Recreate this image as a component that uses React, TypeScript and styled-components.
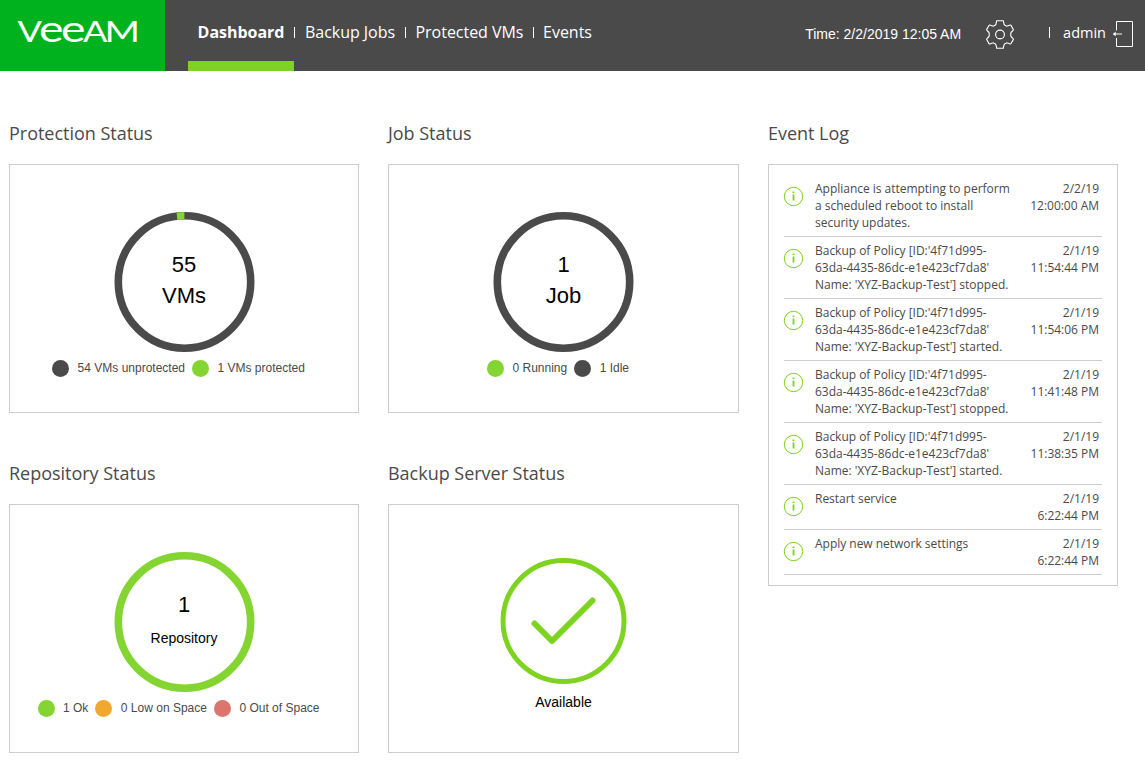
import React from 'react';
import styled, { createGlobalStyle } from 'styled-components';

const Global = createGlobalStyle`
  * { box-sizing: border-box; }
  body { margin: 0; background: #fff; overflow: hidden; font-family: 'Open Sans', sans-serif; color: #4a4a4a; }
`;

const Header = styled.header`
  display: flex;
  height: 71px;
  background: #4a4a4a;
  color: #fff;
`;

const Brand = styled.div`
  width: 165px;
  height: 71px;
  margin-right: 23px;
  background: #00b31e;
`;

const BrandText = styled.text`
  font-family: Lato, sans-serif;
  font-weight: 400;
  fill: #fff;
`;

const Nav = styled.nav`
  display: flex;
`;

const NavItem = styled.a<{ $active?: boolean; $width: number }>`
  display: flex;
  justify-content: center;
  width: ${p => p.$width}px;
  height: 71px;
  line-height: 22px;
  padding-top: 21px;
  font-size: 16px;
  white-space: nowrap;
  font-weight: ${p => (p.$active ? 700 : 400)};
  letter-spacing: -0.03px;
  border-bottom: 10px solid ${p => (p.$active ? '#7ed321' : 'transparent')};
`;

const Separator = styled.span`
  width: 1px;
  height: 11px;
  margin-top: 27px;
  background: #fff;
`;

const Tools = styled.div`
  display: flex;
  margin-left: auto;
  padding-right: 12px;
`;

const Clock = styled.span`
  margin: 26px 24px 0 0;
  font: 14px/16px 'Liberation Sans', sans-serif;
`;

const GearIcon = styled.svg`
  margin: 20px 34px 0 0;
`;

const User = styled.span`
  margin: 22px 7px 0 13px;
  font-size: 14.5px;
  line-height: 22px;
`;

const ExitIcon = styled.svg`
  margin-top: 20px;
`;

const Main = styled.main`
  display: grid;
  grid-template-columns: 350px 351px 350px;
  column-gap: 29px;
  padding: 50px 0 0 9px;
`;

const Column = styled.div`
  display: flex;
  flex-direction: column;
  gap: 48px;
`;

const Title = styled.h2`
  margin: 0 0 18px;
  font-size: 18px;
  line-height: 25px;
  font-weight: 400;
  letter-spacing: -0.02px;
`;

const Card = styled.div`
  display: flex;
  flex-direction: column;
  align-items: center;
  height: 249px;
  padding-top: 46px;
  border: 1px solid #ccc;
`;

const Ring = styled.div`
  display: grid;
  width: 142px;
  height: 142px;
  > * { grid-area: 1 / 1; }
`;

const RingLabel = styled.div`
  display: flex;
  flex-direction: column;
  align-items: center;
  padding-top: 38px;
  font: 22px/31px 'Liberation Sans', sans-serif;
  color: #000;
`;

const RingCaption = styled.span<{ $small?: boolean }>`
  font-size: ${p => (p.$small ? 14 : 22)}px;
  padding-top: ${p => (p.$small ? 3 : 0)}px;
`;

const Legend = styled.div`
  display: flex;
  align-items: center;
  gap: 7px;
  height: 17px;
  margin-top: 7px;
  margin-left: -11px;
  font: 12px/16px 'Liberation Sans', sans-serif;
  white-space: nowrap;
`;

const LegendItem = styled.span`
  display: flex;
  align-items: center;
  gap: 8.5px;
`;

const LegendText = styled.span`
  padding-bottom: 1px;
`;

const Dot = styled.i<{ $color: string }>`
  width: 17px;
  height: 17px;
  border-radius: 50%;
  background: ${p => p.$color};
`;

const Available = styled.div`
  padding-top: 7px;
  font: 14px/20px 'Liberation Sans', sans-serif;
  color: #000;
`;

const CheckIcon = styled.svg`
  margin-top: 6px;
`;

const EventCard = styled.div`
  padding: 10px 15px;
  border: 1px solid #ccc;
`;

const EventRow = styled.div`
  display: flex;
  align-items: flex-start;
  padding: 5px 3px 5px 0;
  border-bottom: 1px solid #ccc;
  font-size: 12px;
  line-height: 17px;
  letter-spacing: -0.02px;
`;

const EventIcon = styled.svg`
  flex: none;
  margin: 6px 11px 0 0;
  overflow: visible;
`;

const EventMessage = styled.div`
  flex: 1;
  white-space: pre-line;
`;

const EventTime = styled.div`
  text-align: right;
  white-space: pre-line;
`;

const DARK = '#4a4a4a';
const GREEN = '#84d432';

function Logo() {
  return (
    <svg width="165" height="71">
      <BrandText x="17.5" y="41.8" fontSize="28.5" textLength="24.5" lengthAdjust="spacingAndGlyphs">V</BrandText>
      <BrandText x="39" y="41.5" fontSize="37.500" textLength="24.5" lengthAdjust="spacingAndGlyphs">e</BrandText>
      <BrandText x="61" y="41.5" fontSize="37.500" textLength="24.5" lengthAdjust="spacingAndGlyphs">e</BrandText>
      <BrandText x="83" y="41.8" fontSize="28.5" textLength="24.5" lengthAdjust="spacingAndGlyphs">A</BrandText>
      <BrandText x="104.5" y="41.8" fontSize="28.5" textLength="35.5" lengthAdjust="spacingAndGlyphs">M</BrandText>
    </svg>
  );
}

function Gear() {
  return (
    <GearIcon width="30" height="30" viewBox="0 0 30 30" fill="none" stroke="#fff" strokeWidth="1.1" strokeLinejoin="round">
      <path d="M11.700 .7h6.600l.7 3.300q.2 .8 1 1.300l.9.500q.8.500 1.600.200l2.600-.9q.6-.2.900.3l2.300 4q.3.500-.2.900l-1.700 1.700q-.6.600-.6 1.400v2.200q0 .8.600 1.400l1.700 1.700q.5.400.2.900l-2.300 4q-.3.500-.9.300l-2.600-.9q-.8-.3-1.600.2l-.9.500q-.8.500-1 1.300l-.7 3.300h-6.600l-.7-3.300q-.2-.8-1-1.300l-.9-.5q-.8-.5-1.600-.2l-2.600.9q-.6.200-.9-.3l-2.300-4q-.3-.5.2-.9l1.700-1.700q.6-.6.600-1.400v-2.200q0-.8-.6-1.400l-1.700-1.700q-.5-.4-.2-.9l2.300-4q.3-.5.900-.3l2.600.9q.8.300 1.600-.2l.9-.5q.8-.5 1-1.300z" />
      <circle cx="15" cy="14.500" r="4.400" />
    </GearIcon>
  );
}

function Exit() {
  return (
    <ExitIcon width="20" height="28" viewBox="0 0 20 28" fill="none" stroke="#fff">
      <path d="M3.500 10.500V1.500h16v25h-16V18" />
      <path d="M2 14h7" strokeWidth="1.300" strokeOpacity=".75" />
      <path d="M-.3 14l3-2.300v4.600z" fill="#fff" stroke="none" />
    </ExitIcon>
  );
}

interface DonutProps {
  value: number;
  caption: string;
  small?: boolean;
  color: string;
  share?: number;
  center?: number;
  legend: [string, string][];
}

function Donut({ value, caption, small, color, share, center = 71.5, legend }: DonutProps) {
  const length = 2 * Math.PI * 66.2;
  return (
    <Card>
      <Ring>
        <svg width="142" height="142" fill="none" strokeWidth="7.600">
          <circle cx={center} cy="71" r="66.200" stroke={color} />
          {share && (
            <circle cx={center} cy="71" r="66.200" stroke={GREEN}
              transform={`rotate(${-90 - 360 * share} ${center} 71)`}
              strokeDasharray={`${length * share} ${length}`} />
          )}
        </svg>
        <RingLabel>
          <span>{value}</span>
          <RingCaption $small={small}>{caption}</RingCaption>
        </RingLabel>
      </Ring>
      <Legend>
        {legend.map(([c, label]) => (
          <LegendItem key={label}><Dot $color={c} /><LegendText>{label}</LegendText></LegendItem>
        ))}
      </Legend>
    </Card>
  );
}

const policy = (state: string) => `Backup of Policy [ID:'4f71d995-\n63da-4435-86dc-e1e423cf7da8'\nName: 'XYZ-Backup-Test'] ${state}.`;

const events: [string, string][] = [
  ['Appliance is attempting to perform\na scheduled reboot to install\nsecurity updates.', '2/2/19\n12:00:00 AM'],
  [policy('stopped'), '2/1/19\n11:54:44 PM'],
  [policy('started'), '2/1/19\n11:54:06 PM'],
  [policy('stopped'), '2/1/19\n11:41:48 PM'],
  [policy('started'), '2/1/19\n11:38:35 PM'],
  ['Restart service', '2/1/19\n6:22:44 PM'],
  ['Apply new network settings', '2/1/19\n6:22:44 PM'],
];

export default function App() {
  return (
    <>
      <Global />
      <Header>
        <Brand><Logo /></Brand>
        <Nav>
          <NavItem $active $width={106}>Dashboard</NavItem>
          <Separator />
          <NavItem $width={110}>Backup Jobs</NavItem>
          <Separator />
          <NavItem $width={127}>Protected VMs</NavItem>
          <Separator />
          <NavItem $width={67}>Events</NavItem>
        </Nav>
        <Tools>
          <Clock>Time: 2/2/2019 12:05 AM</Clock>
          <Gear />
          <Separator />
          <User>admin</User>
          <Exit />
        </Tools>
      </Header>
      <Main>
        <Column>
          <section>
            <Title>Protection Status</Title>
            <Donut value={55} caption="VMs" color={DARK} share={1 / 55}
              legend={[[DARK, '54 VMs unprotected'], [GREEN, '1 VMs protected']]} />
          </section>
          <section>
            <Title>Repository Status</Title>
            <Donut value={1} caption="Repository" small color={GREEN}
              legend={[[GREEN, '1 Ok'], ['#f0a830', '0 Low on Space'], ['#dd746e', '0 Out of Space']]} />
          </section>
        </Column>
        <Column>
          <section>
            <Title>Job Status</Title>
            <Donut value={1} caption="Job" color={DARK} center={70.5}
              legend={[[GREEN, '0 Running'], [DARK, '1 Idle']]} />
          </section>
          <section>
            <Title>Backup Server Status</Title>
            <Card>
              <CheckIcon width="128" height="128" fill="none" stroke="#7ed321" strokeLinecap="round" strokeLinejoin="round">
                <circle cx="63.500" cy="64" r="60.500" strokeWidth="5" />
                <path d="M34.500 66.500L52 84l40.500-40.500" strokeWidth="6" />
              </CheckIcon>
              <Available>Available</Available>
            </Card>
          </section>
        </Column>
        <section>
          <Title>Event Log</Title>
          <EventCard>
            {events.map(([message, time], i) => (
              <EventRow key={i}>
                <EventIcon width="20" height="20" fill="none" stroke="#7ed321">
                  <circle cx="9.500" cy="10.500" r="9.200" />
                  <path d="M9.500 8.500v6M9.500 5.500v1.500" strokeWidth="1.800" />
                </EventIcon>
                <EventMessage>{message}</EventMessage>
                <EventTime>{time}</EventTime>
              </EventRow>
            ))}
          </EventCard>
        </section>
      </Main>
    </>
  );
}
